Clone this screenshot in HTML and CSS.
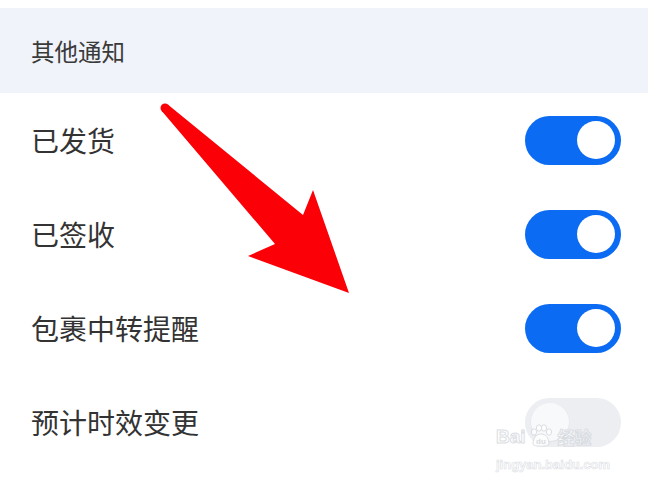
FILE: index.html
```html
<!DOCTYPE html>
<html lang="zh-CN">
<head>
    <meta charset="UTF-8">
    <title>其他通知</title>
    <link rel="stylesheet" href="styles.css">
</head>
<body>
    <div class="page">
        <div class="section-title">其他通知</div>

        <div class="setting-row">
            <span class="label">已发货</span>
            <span class="switch on"><span class="knob"></span></span>
        </div>
        <div class="setting-row">
            <span class="label">已签收</span>
            <span class="switch on"><span class="knob"></span></span>
        </div>
        <div class="setting-row">
            <span class="label">包裹中转提醒</span>
            <span class="switch on"><span class="knob"></span></span>
        </div>
        <div class="setting-row">
            <span class="label">预计时效变更</span>
            <span class="switch off"><span class="knob"></span></span>
        </div>

        <!-- red pointer arrow drawn over the list -->
        <svg class="pointer" width="648" height="484" viewBox="0 0 648 484">
            <circle cx="165" cy="108" r="4.5" fill="#fb0007"/>
            <polygon fill="#fb0007"
                points="167.8,104.5 303,215 313,190 349,293 248,256 275,244 162.2,111.5"/>
        </svg>

        <div class="watermark">
            <div class="wm-brand">
                <span>Bai</span>
                <svg class="wm-paw" width="26" height="24" viewBox="0 0 26 24">
                    <g fill="#fff" stroke="#d6d9de" stroke-width="1">
                        <ellipse cx="6" cy="8" rx="2.6" ry="3.2"/>
                        <ellipse cx="11" cy="4" rx="2.6" ry="3.2"/>
                        <ellipse cx="16" cy="4" rx="2.6" ry="3.2"/>
                        <ellipse cx="21" cy="8" rx="2.6" ry="3.2"/>
                        <path d="M5 20 C5 13 9 10 13 10 C17 10 21 13 21 20 C21 23 5 23 5 20 Z"/>
                    </g>
                    <text x="13" y="20" text-anchor="middle" font-size="8" font-weight="bold" font-family="Liberation Sans, sans-serif" fill="#d6d9de">du</text>
                </svg>
                <span class="wm-cn">经验</span>
            </div>
            <div class="wm-url">jingyan.baidu.com</div>
        </div>
    </div>
</body>
</html>
```

FILE: styles.css
```css
:root {
    --header-bg: #f0f3f9;
    --text-dark: #333333;
    --switch-blue: #0b6bf2;
    --switch-off: #eceef2;
}

* {
    margin: 0;
    padding: 0;
    box-sizing: border-box;
}

body {
    background-color: #ffffff;
    font-family: "Noto Sans CJK SC", "Noto Sans", sans-serif;
    color: var(--text-dark);
}

.page {
    position: relative;
    width: 648px;
    height: 484px;
    overflow: hidden;
    padding-top: 8px;
}

.section-title {
    height: 85px;
    display: flex;
    align-items: center;
    padding-left: 31px;
    background-color: var(--header-bg);
    font-size: 23.5px;
    color: #3a3a3a;
}

.setting-row {
    height: 94px;
    display: flex;
    align-items: center;
    justify-content: space-between;
    padding: 0 27px 0 31px;
}

.label {
    font-size: 28px;
}

.switch {
    width: 96px;
    height: 49px;
    border-radius: 25px;
    display: flex;
    align-items: center;
    padding: 0 6px;
}

.switch .knob {
    width: 38px;
    height: 38px;
    border-radius: 50%;
    background-color: #ffffff;
}

.switch.on {
    background-color: var(--switch-blue);
    justify-content: flex-end;
}

.switch.off {
    background-color: var(--switch-off);
    justify-content: flex-start;
}

.switch.off .knob {
    background-color: #f8f9fb;
    box-shadow: 0 1px 2px rgba(0,0,0,0.06);
}

.pointer {
    position: absolute;
    top: 0;
    left: 0;
}

.watermark {
    position: absolute;
    left: 496px;
    top: 424px;
    display: flex;
    flex-direction: column;
    align-items: flex-start;
    opacity: 0.85;
}

.wm-brand {
    display: flex;
    align-items: flex-end;
    gap: 2px;
    font-family: "Liberation Sans", sans-serif;
    font-weight: bold;
    font-size: 19px;
    line-height: 22px;
    color: #ffffff;
    -webkit-text-stroke: 1px #d6d9de;
}

.wm-cn {
    font-family: "Noto Sans CJK SC", sans-serif;
    font-size: 17px;
    margin-left: 2px;
}

.wm-url {
    margin-top: 9px;
    font-family: "Liberation Sans", sans-serif;
    font-weight: bold;
    font-size: 13px;
    color: #ffffff;
    -webkit-text-stroke: 0.6px #d6d9de;
}
```
